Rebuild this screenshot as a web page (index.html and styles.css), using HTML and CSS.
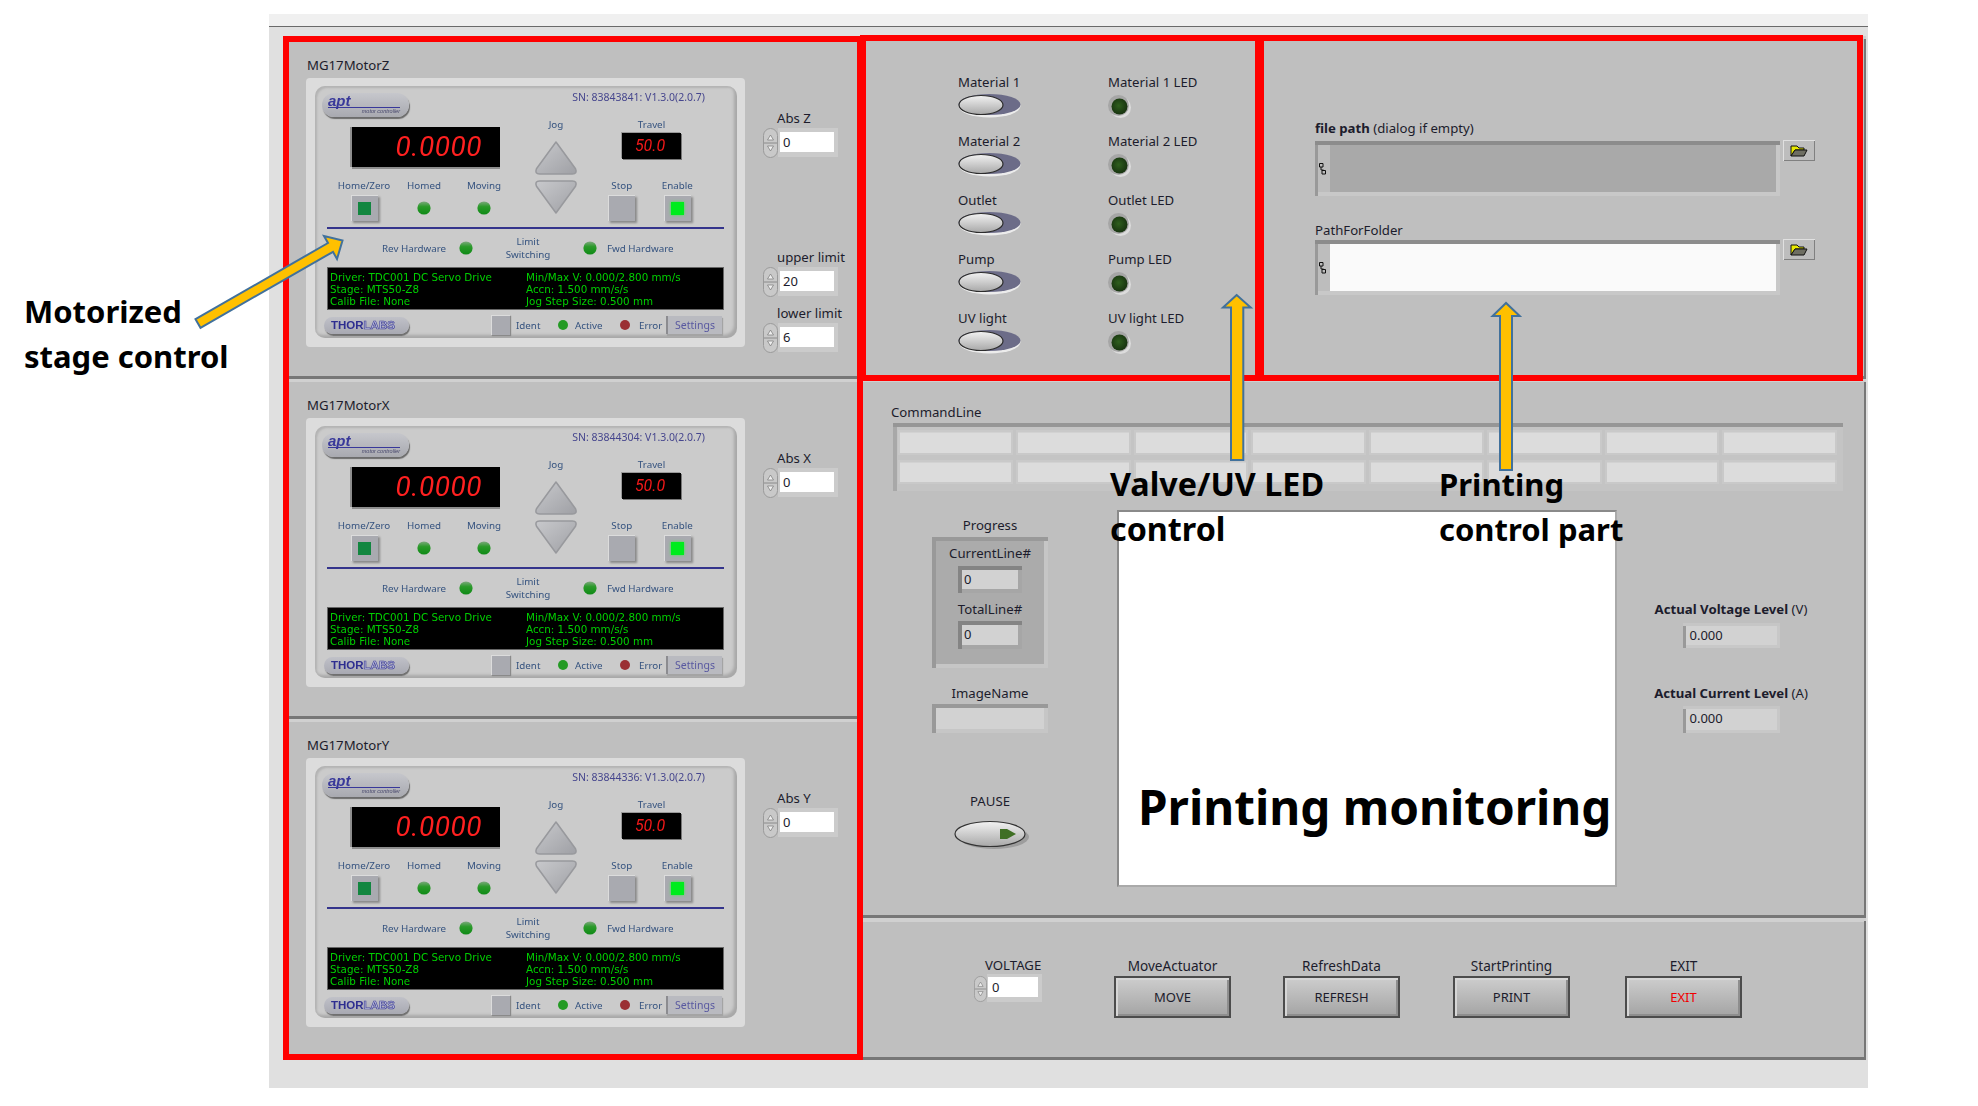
FILE: index.html
```html
<!DOCTYPE html>
<html lang="en">
<head>
<meta charset="utf-8">
<title>Printer control panel</title>
<link rel="stylesheet" href="styles.css">
</head>
<body>
<svg class="defs" width="0" height="0" aria-hidden="true">
  <defs>
    <linearGradient id="knob" x1="0" y1="0" x2="0" y2="1"><stop offset="0" stop-color="#f2f2f2"/><stop offset="1" stop-color="#a8a8a8"/></linearGradient>
    <radialGradient id="dark" cx=".45" cy=".45" r=".6"><stop offset="0" stop-color="#2f5f1e"/><stop offset="1" stop-color="#16300f"/></radialGradient>
    <linearGradient id="lit" x1="0" y1="0" x2="0" y2="1"><stop offset="0" stop-color="#7fa87f"/><stop offset=".4" stop-color="#2a9a2a"/><stop offset="1" stop-color="#0f8a16"/></linearGradient>
    <linearGradient id="tri" x1="0" y1="0" x2="1" y2="1"><stop offset="0" stop-color="#c8c9cc"/><stop offset="1" stop-color="#9fa0a5"/></linearGradient>
    <symbol id="toggle" viewBox="0 0 63 25">
      <ellipse cx="31.5" cy="13" rx="31" ry="11.5" fill="#ececec"/>
      <ellipse cx="31.5" cy="11.5" rx="31" ry="10.5" fill="#6c6c88"/>
      <ellipse cx="23" cy="12" rx="22" ry="9.5" fill="url(#knob)" stroke="#2c2c2c" stroke-width="1.2"/>
    </symbol>
    <symbol id="ledoff" viewBox="0 0 23 23">
      <circle cx="12.5" cy="12.5" r="10.5" fill="#dcdcdc"/>
      <circle cx="10.5" cy="10.5" r="10.5" fill="#a6a6a6"/>
      <circle cx="11.5" cy="11.5" r="8" fill="url(#dark)"/>
    </symbol>
    <symbol id="ledon" viewBox="0 0 14 14"><circle cx="7" cy="7" r="6.6" fill="url(#lit)"/></symbol>
    <symbol id="folder" viewBox="0 0 18 12">
      <path d="M1 1h6l2 2h5v2H5L1 11z" fill="#e8e800" stroke="#111" stroke-width="1"/>
      <path d="M1 11 5 5h12l-3 6z" fill="#6e6e62" stroke="#111" stroke-width="1"/>
    </symbol>
    <symbol id="pathglyph" viewBox="0 0 7 12">
      <path d="M.5.5h3.5v3.5H.5zM3 7.5h3.500v3.500H3zM2 4v3h2.500" fill="none" stroke="#111" stroke-width="1"/>
    </symbol>
    <symbol id="spin" viewBox="0 0 15 30">
      <rect x=".5" y=".5" width="14" height="29" rx="7" fill="#c9c9c9" stroke="#9a9a9a"/>
      <path d="M1 15h13" stroke="#8a8a8a"/>
      <path d="M7.500 7 4.500 12h6z" fill="#efefef" stroke="#777" stroke-width=".7"/>
      <path d="M7.500 23 4.500 18h6z" fill="#efefef" stroke="#777" stroke-width=".7"/>
    </symbol>
    <symbol id="jogarrows" viewBox="0 0 42 73">
      <path d="M21 2 40 28q2 5-3 5H5q-5 0-3-5z" fill="url(#tri)" stroke="#98999d" stroke-width="1.500" stroke-linejoin="round"/>
      <path d="M21 71 40 45q2-5-3-5H5q-5 0-3 5z" fill="url(#tri)" stroke="#98999d" stroke-width="1.500" stroke-linejoin="round"/>
    </symbol>
  </defs>
</svg>

<div class="window">
  <div class="titlebar"></div>
  <div class="panes">
    <div class="motors">

      <section class="panel motor">
        <div class="panel-label">MG17MotorZ</div>
        <div class="motor-body">
          <div class="device">
            <div class="device-inner">
              <div class="dev-header">
                <div class="apt-logo"><span class="apt-word">apt</span><span class="apt-sub">motor controller</span></div>
                <div class="sn">SN: 83843841: V1.3.0(2.0.7)</div>
              </div>
              <div class="dev-main">
                <div class="dev-left">
                  <div class="readout"><span class="seg-big">0.0000</span></div>
                  <div class="cells">
                    <div class="cell"><span class="dev-text">Home/Zero</span><span class="sq-btn"><i class="sq-mark"></i></span></div>
                    <div class="cell"><span class="dev-text">Homed</span><svg class="led-on"><use href="#ledon"/></svg></div>
                    <div class="cell"><span class="dev-text">Moving</span><svg class="led-on"><use href="#ledon"/></svg></div>
                  </div>
                </div>
                <div class="dev-jog"><span class="dev-text">Jog</span><svg class="jog"><use href="#jogarrows"/></svg></div>
                <div class="dev-right">
                  <div class="travel"><span class="dev-text">Travel</span><div class="travel-box"><span class="seg-small">50.0</span></div></div>
                  <div class="cells">
                    <div class="cell cell-r"><span class="dev-text">Stop</span><span class="sq-btn"></span></div>
                    <div class="cell cell-r"><span class="dev-text">Enable</span><span class="sq-btn"><i class="sq-lit"></i></span></div>
                  </div>
                </div>
              </div>
              <div class="dev-line"></div>
              <div class="limits">
                <span class="dev-text rev">Rev Hardware</span><svg class="led-on l1"><use href="#ledon"/></svg>
                <span class="dev-text limit">Limit<br>Switching</span><svg class="led-on l2"><use href="#ledon"/></svg>
                <span class="dev-text fwd">Fwd Hardware</span>
              </div>
              <div class="console">
                <div>Driver: TDC001 DC Servo Drive<br>Stage: MTS50-Z8<br>Calib File: None</div>
                <div>Min/Max V: 0.000/2.800 mm/s<br>Accn: 1.500 mm/s/s<br>Jog Step Size: 0.500 mm</div>
              </div>
              <div class="dev-footer">
                <div class="thor"><b>THOR</b><span>LABS</span></div>
                <span class="id-btn"></span><span class="dev-text id-t">Ident</span>
                <i class="dot dot-g"></i><span class="dev-text act-t">Active</span>
                <i class="dot dot-r"></i><span class="dev-text err-t">Error</span>
                <span class="settings">Settings</span>
              </div>
            </div>
          </div>
          <div class="side">
            <div class="num"><div class="num-label">Abs Z</div><div class="num-row"><svg class="spin"><use href="#spin"/></svg><div class="num-field">0</div></div></div>
            <div class="num num-upper"><div class="num-label">upper limit</div><div class="num-row"><svg class="spin"><use href="#spin"/></svg><div class="num-field">20</div></div></div>
            <div class="num num-lower"><div class="num-label">lower limit</div><div class="num-row"><svg class="spin"><use href="#spin"/></svg><div class="num-field">6</div></div></div>
          </div>
        </div>
      </section>

      <section class="panel motor">
        <div class="panel-label">MG17MotorX</div>
        <div class="motor-body">
          <div class="device">
            <div class="device-inner">
              <div class="dev-header">
                <div class="apt-logo"><span class="apt-word">apt</span><span class="apt-sub">motor controller</span></div>
                <div class="sn">SN: 83844304: V1.3.0(2.0.7)</div>
              </div>
              <div class="dev-main">
                <div class="dev-left">
                  <div class="readout"><span class="seg-big">0.0000</span></div>
                  <div class="cells">
                    <div class="cell"><span class="dev-text">Home/Zero</span><span class="sq-btn"><i class="sq-mark"></i></span></div>
                    <div class="cell"><span class="dev-text">Homed</span><svg class="led-on"><use href="#ledon"/></svg></div>
                    <div class="cell"><span class="dev-text">Moving</span><svg class="led-on"><use href="#ledon"/></svg></div>
                  </div>
                </div>
                <div class="dev-jog"><span class="dev-text">Jog</span><svg class="jog"><use href="#jogarrows"/></svg></div>
                <div class="dev-right">
                  <div class="travel"><span class="dev-text">Travel</span><div class="travel-box"><span class="seg-small">50.0</span></div></div>
                  <div class="cells">
                    <div class="cell cell-r"><span class="dev-text">Stop</span><span class="sq-btn"></span></div>
                    <div class="cell cell-r"><span class="dev-text">Enable</span><span class="sq-btn"><i class="sq-lit"></i></span></div>
                  </div>
                </div>
              </div>
              <div class="dev-line"></div>
              <div class="limits">
                <span class="dev-text rev">Rev Hardware</span><svg class="led-on l1"><use href="#ledon"/></svg>
                <span class="dev-text limit">Limit<br>Switching</span><svg class="led-on l2"><use href="#ledon"/></svg>
                <span class="dev-text fwd">Fwd Hardware</span>
              </div>
              <div class="console">
                <div>Driver: TDC001 DC Servo Drive<br>Stage: MTS50-Z8<br>Calib File: None</div>
                <div>Min/Max V: 0.000/2.800 mm/s<br>Accn: 1.500 mm/s/s<br>Jog Step Size: 0.500 mm</div>
              </div>
              <div class="dev-footer">
                <div class="thor"><b>THOR</b><span>LABS</span></div>
                <span class="id-btn"></span><span class="dev-text id-t">Ident</span>
                <i class="dot dot-g"></i><span class="dev-text act-t">Active</span>
                <i class="dot dot-r"></i><span class="dev-text err-t">Error</span>
                <span class="settings">Settings</span>
              </div>
            </div>
          </div>
          <div class="side">
            <div class="num"><div class="num-label">Abs X</div><div class="num-row"><svg class="spin"><use href="#spin"/></svg><div class="num-field">0</div></div></div>
          </div>
        </div>
      </section>

      <section class="panel motor">
        <div class="panel-label">MG17MotorY</div>
        <div class="motor-body">
          <div class="device">
            <div class="device-inner">
              <div class="dev-header">
                <div class="apt-logo"><span class="apt-word">apt</span><span class="apt-sub">motor controller</span></div>
                <div class="sn">SN: 83844336: V1.3.0(2.0.7)</div>
              </div>
              <div class="dev-main">
                <div class="dev-left">
                  <div class="readout"><span class="seg-big">0.0000</span></div>
                  <div class="cells">
                    <div class="cell"><span class="dev-text">Home/Zero</span><span class="sq-btn"><i class="sq-mark"></i></span></div>
                    <div class="cell"><span class="dev-text">Homed</span><svg class="led-on"><use href="#ledon"/></svg></div>
                    <div class="cell"><span class="dev-text">Moving</span><svg class="led-on"><use href="#ledon"/></svg></div>
                  </div>
                </div>
                <div class="dev-jog"><span class="dev-text">Jog</span><svg class="jog"><use href="#jogarrows"/></svg></div>
                <div class="dev-right">
                  <div class="travel"><span class="dev-text">Travel</span><div class="travel-box"><span class="seg-small">50.0</span></div></div>
                  <div class="cells">
                    <div class="cell cell-r"><span class="dev-text">Stop</span><span class="sq-btn"></span></div>
                    <div class="cell cell-r"><span class="dev-text">Enable</span><span class="sq-btn"><i class="sq-lit"></i></span></div>
                  </div>
                </div>
              </div>
              <div class="dev-line"></div>
              <div class="limits">
                <span class="dev-text rev">Rev Hardware</span><svg class="led-on l1"><use href="#ledon"/></svg>
                <span class="dev-text limit">Limit<br>Switching</span><svg class="led-on l2"><use href="#ledon"/></svg>
                <span class="dev-text fwd">Fwd Hardware</span>
              </div>
              <div class="console">
                <div>Driver: TDC001 DC Servo Drive<br>Stage: MTS50-Z8<br>Calib File: None</div>
                <div>Min/Max V: 0.000/2.800 mm/s<br>Accn: 1.500 mm/s/s<br>Jog Step Size: 0.500 mm</div>
              </div>
              <div class="dev-footer">
                <div class="thor"><b>THOR</b><span>LABS</span></div>
                <span class="id-btn"></span><span class="dev-text id-t">Ident</span>
                <i class="dot dot-g"></i><span class="dev-text act-t">Active</span>
                <i class="dot dot-r"></i><span class="dev-text err-t">Error</span>
                <span class="settings">Settings</span>
              </div>
            </div>
          </div>
          <div class="side">
            <div class="num"><div class="num-label">Abs Y</div><div class="num-row"><svg class="spin"><use href="#spin"/></svg><div class="num-field">0</div></div></div>
          </div>
        </div>
      </section>
    </div>

    <div class="right">
      <div class="right-top">
        <section class="panel valves">
          <div class="valve"><div class="lbl">Material 1</div><svg class="toggle"><use href="#toggle"/></svg></div>
          <div class="valve"><div class="lbl">Material 1 LED</div><svg class="led-off"><use href="#ledoff"/></svg></div>
          <div class="valve"><div class="lbl">Material 2</div><svg class="toggle"><use href="#toggle"/></svg></div>
          <div class="valve"><div class="lbl">Material 2 LED</div><svg class="led-off"><use href="#ledoff"/></svg></div>
          <div class="valve"><div class="lbl">Outlet</div><svg class="toggle"><use href="#toggle"/></svg></div>
          <div class="valve"><div class="lbl">Outlet LED</div><svg class="led-off"><use href="#ledoff"/></svg></div>
          <div class="valve"><div class="lbl">Pump</div><svg class="toggle"><use href="#toggle"/></svg></div>
          <div class="valve"><div class="lbl">Pump LED</div><svg class="led-off"><use href="#ledoff"/></svg></div>
          <div class="valve"><div class="lbl">UV light</div><svg class="toggle"><use href="#toggle"/></svg></div>
          <div class="valve"><div class="lbl">UV light LED</div><svg class="led-off"><use href="#ledoff"/></svg></div>
        </section>
        <section class="panel paths">
          <div class="lbl"><b>file path</b> (dialog if empty)</div>
          <div class="path-row">
            <div class="path-field"><span class="path-gutter"><svg class="path-glyph"><use href="#pathglyph"/></svg></span><span class="path-value path-disabled"></span></div>
            <span class="browse"><svg class="folder"><use href="#folder"/></svg></span>
          </div>
          <div class="lbl path-second">PathForFolder</div>
          <div class="path-row path-row-2">
            <div class="path-field"><span class="path-gutter"><svg class="path-glyph"><use href="#pathglyph"/></svg></span><span class="path-value path-enabled"></span></div>
            <span class="browse"><svg class="folder"><use href="#folder"/></svg></span>
          </div>
        </section>
      </div>

      <section class="panel monitor">
        <div class="lbl">CommandLine</div>
        <div class="cmd-table">
          <span></span><span></span><span></span><span></span><span></span><span></span><span></span><span></span>
          <span></span><span></span><span></span><span></span><span></span><span></span><span></span><span></span>
        </div>
        <div class="monitor-row">
          <div class="mon-left">
            <div class="lbl center">Progress</div>
            <div class="progress">
              <div class="lbl center">CurrentLine#</div>
              <div class="ind">0</div>
              <div class="lbl center total">TotalLine#</div>
              <div class="ind ind-total">0</div>
            </div>
            <div class="lbl center image-lbl">ImageName</div>
            <div class="image-ind"></div>
            <div class="lbl center pause-lbl">PAUSE</div>
            <svg class="pause" viewBox="0 0 76 30" aria-hidden="true">
              <ellipse cx="40" cy="17" rx="35" ry="12" fill="#8f8f8f" opacity=".7"/>
              <ellipse cx="36" cy="14" rx="35" ry="12.500" fill="url(#knob)" stroke="#333" stroke-width="1.200"/>
              <path d="M46 9h7l9 5-9 5h-7z" fill="#3f6f24"/>
            </svg>
          </div>
          <div class="canvas"></div>
          <div class="mon-right">
            <div class="lbl center"><b>Actual Voltage Level</b> (V)</div>
            <div class="ind wide">0.000</div>
            <div class="lbl center current-lbl"><b>Actual Current Level</b> (A)</div>
            <div class="ind wide wide-2">0.000</div>
          </div>
        </div>
      </section>

      <section class="panel actions">
        <div class="voltage">
          <div class="lbl volt-lbl">VOLTAGE</div>
          <div class="num-row volt-row"><svg class="spin spin-v"><use href="#spin"/></svg><div class="num-field volt-field">0</div></div>
        </div>
        <div class="action a1"><div class="lbl center">MoveActuator</div><div class="btn">MOVE</div></div>
        <div class="action a2"><div class="lbl center">RefreshData</div><div class="btn">REFRESH</div></div>
        <div class="action a3"><div class="lbl center">StartPrinting</div><div class="btn">PRINT</div></div>
        <div class="action a4"><div class="lbl center">EXIT</div><div class="btn btn-exit">EXIT</div></div>
      </section>
    </div>
  </div>
</div>

<div class="frame frame-motors"></div>
<div class="frame frame-valves"></div>
<div class="frame frame-paths"></div>

<svg class="arrows" viewBox="0 0 1978 1106" aria-hidden="true">
  <path class="arrow" d="M342.500 240.500 324 236 328 243 195.500 319.200 200.500 327.800 333 251.800 337 259z"/>
  <path class="arrow" d="M1236.700 295 1223 307.500H1231V460H1243.300V307.500H1250.700z"/>
  <path class="arrow" d="M1506 303 1492.600 316H1500V470H1512V316H1519.700z"/>
</svg>

<div class="note note-motor">Motorized<br>stage control</div>
<div class="note note-valve">Valve/UV LED<br>control</div>
<div class="note note-print">Printing<br>control part</div>
<div class="note note-monitor">Printing monitoring</div>
</body>
</html>
```

FILE: styles.css
```css
* { box-sizing: border-box; }
html, body { margin: 0; height: 1106px; overflow: hidden; background: #fff; }
body { padding: 14px 110px 18px 269px; font-family: "Noto Sans", "Liberation Sans", sans-serif; font-size: 13.200px; color: #1c1c2c; position: relative; }
.defs { position: absolute; }
svg { display: block; }

.window { height: 1074px; background: #e0e0e0; display: flex; flex-direction: column; }
.titlebar { height: 13px; flex: none; background: #f0f0f0; border-bottom: 1px solid #6a6a6a; }
.panes { flex: 1; display: grid; grid-template-columns: 577px 1fr; padding: 9px 2px 28px 14px; min-height: 0; }
.panel { background: #bfbfbf; box-shadow: inset 2px 3px 0 #d0d0d0, inset -2px -3px 0 #777; }

/* motor column */
.motors { display: grid; grid-template-rows: 343px 340px 341px; }
.motor { padding: 19px 0 0 24px; }
.motor:first-child { padding-top: 22px; }
.panel-label { height: 14px; line-height: 15px; }
.motor-body { display: flex; margin: 6px 0 0 -1px; }

.device { width: 439px; height: 269px; flex: none; padding: 8px 8px 9px 9px; background: #dcdcdc; border-radius: 4px; filter: blur(.35px); }
.device-inner { height: 252px; padding: 7px 8px 0 7px; background: #cbcbcb; border-radius: 10px; box-shadow: inset 2px 2px 2px #b4b4b4, inset -3px -3px 3px #a8a8a8; }
.dev-text { font-size: 9.800px; line-height: 13px; color: #34527f; display: block; white-space: nowrap; }

.dev-header { height: 24px; display: flex; justify-content: space-between; }
.apt-logo { width: 87px; height: 24px; padding: 0 0 0 6px; border-radius: 12px; background: linear-gradient(#c6c7cc, #a8a9b0); box-shadow: 1px 2px 1px #6c6c6c; color: #38389a; }
.apt-word { display: block; font: italic bold 15px/15px "Liberation Sans", sans-serif; border-bottom: 1px solid #38389a; width: 72px; height: 15px; }
.apt-sub { display: block; font: italic 5.500px/7px "Liberation Sans", sans-serif; text-align: right; width: 72px; color: #44446a; }
.sn { font-size: 10.500px; line-height: 10px; height: 10px; margin: -1px 24px 0 0; color: #46468e; white-space: nowrap; }

.dev-main { display: flex; height: 104px; }
.dev-left { width: 204px; display: flex; flex-direction: column; justify-content: space-between; padding-top: 10px; }
.readout { width: 148px; height: 40px; margin-left: 30px; background: #000; box-shadow: -2px 0 0 #8e8e8e, 0 2px 0 #8e8e8e; display: flex; align-items: center; justify-content: flex-end; padding-right: 18px; }
.seg-big { font: italic 400 28px/1 Roboto, sans-serif; letter-spacing: .5px; color: #ff2020; }
.cells { display: flex; }
.dev-left .cells { padding-left: 12px; }
.cell { width: 60px; display: flex; flex-direction: column; align-items: center; gap: 3px; height: 42px; }
.cell-r { width: 59px; }
.sq-btn { width: 27px; height: 26px; background: #a9aab0; box-shadow: inset 1px 1px 0 #dcdcdc, 2px 2px 2px #8a8a8a; display: flex; align-items: center; justify-content: center; }
.sq-mark { width: 13px; height: 13px; background: #128640; display: block; }
.sq-lit { width: 13px; height: 13px; background: #00ec1e; box-shadow: 0 0 3px #3ef04a; display: block; }
.led-on { width: 14px; height: 14px; margin-top: 6px; }
.dev-jog { width: 60px; display: flex; flex-direction: column; align-items: center; padding-top: 1px; }
.jog { width: 44px; height: 75px; margin-top: 9px; }
.dev-right { width: 119px; padding-left: 8px; display: flex; flex-direction: column; justify-content: space-between; padding-top: 1px; }
.travel { width: 59px; margin-left: 28px; display: flex; flex-direction: column; align-items: center; }
.travel-box { width: 59px; height: 26px; margin-top: 2px; background: #000; box-shadow: -1px -1px 0 #999, 1px 1px 0 #777; display: flex; align-items: center; justify-content: center; padding-right: 3px; }
.seg-small { font: italic 400 16px/1 Roboto, sans-serif; color: #f01818; }

.dev-line { height: 2px; margin: 6px 5px 0 5px; background: #34348c; }
.limits { height: 38px; display: flex; align-items: center; }
.limits .led-on { margin: 0; }
.rev { margin-left: 60px; width: 65px; }
.l1 { margin-left: 12px !important; }
.limit { margin-left: 25px; width: 60px; text-align: center; }
.l2 { margin-left: 25px !important; }
.fwd { margin-left: 10px; }
.console { height: 43px; margin: 0 5px; padding: 4px 0 0 3px; background: #000; box-shadow: inset 0 0 0 1px #666; color: #00d000; display: grid; grid-template-columns: 196px 1fr; font: 10.350px/12px "DejaVu Sans", sans-serif; white-space: nowrap; }
.dev-footer { margin-top: 5px; height: 20px; display: flex; align-items: center; }
.thor { width: 85px; height: 17px; margin-left: 2px; flex: none; border-radius: 9px; background: linear-gradient(#c0c1c8, #a8a9b2); box-shadow: 1px 2px 1px #707070; padding-left: 7px; font: bold 11.500px/16px "Liberation Sans", sans-serif; color: #2e2e90; white-space: nowrap; }
.thor b { font-weight: bold; }
.thor span { color: #c0c2dc; -webkit-text-stroke: .7px #44449a; }
.id-btn { width: 19px; height: 20px; margin-left: 82px; flex: none; background: #a9aab0; box-shadow: inset 1px 1px 0 #dcdcdc, 1px 1px 1px #8a8a8a; }
.id-t { margin-left: 6px; width: 40px; flex: none; }
.dot { display: block; flex: none; width: 10px; height: 10px; border-radius: 50%; }
.dot-g { background: #249a24; margin-left: 2px; }
.act-t { margin-left: 7px; width: 45px; flex: none; }
.dot-r { background: #9a2f34; }
.err-t { margin-left: 9px; width: 27px; flex: none; }
.settings { width: 56px; height: 18px; flex: none; padding-left: 9px; font-size: 10.500px; line-height: 18px; color: #5858a0; background: #b9bac0; box-shadow: inset 2px 0 0 #8c8c90, 1px 2px 1px #a4a4a4; }

.side { width: 76px; margin-left: 18px; padding-top: 33px; flex: none; }
.num-label { margin-left: 14px; height: 14px; line-height: 15px; white-space: nowrap; }
.num-row { display: flex; margin-top: 3px; height: 30px; }
.spin { width: 15px; height: 30px; flex: none; }
.num-field { width: 60px; height: 29px; font-size: 13px; line-height: 20px; background: linear-gradient(#fff, #fff) 2px 4px / 54px 20px no-repeat, #cbcbcb; padding: 4px 0 0 5px; }
.num-upper { margin-top: 92px; }
.num-lower { margin-top: 9px; }

/* top right */
.right { display: grid; grid-template-rows: 343px 539px 142px; }
.right-top { display: grid; grid-template-columns: 400px 1fr; }
.lbl { line-height: 15px; height: 14px; white-space: nowrap; }
.center { text-align: center; }
.valves { padding: 39px 0 0 98px; display: grid; grid-template-columns: 150px 1fr; grid-auto-rows: 43px; row-gap: 16px; box-shadow: inset 2px 3px 0 #d0d0d0, inset -3px -1px 0 #999; }
.toggle { width: 63px; height: 25px; margin-top: 4px; }
.led-off { width: 23px; height: 23px; margin-top: 6px; }
.paths { padding: 85px 0 0 55px; }
.path-row { display: flex; gap: 3px; margin-top: 6px; align-items: flex-start; }
.path-row-2 { margin-top: 3px; }
.path-second { margin-top: 27px; }
.path-field { width: 465px; height: 55px; display: flex; padding: 4px 4px 4px 3px; background: #c8c8c8; box-shadow: inset 0 4px 0 #8c8c8c, inset 3px 0 0 #999; }
.path-gutter { width: 12px; padding-right: 3px; background: #bdbdbd; display: flex; align-items: center; justify-content: center; }
.path-glyph { width: 7px; height: 12px; }
.path-value { flex: 1; }
.path-disabled { background: #a9a9a9; }
.path-enabled { background: #fafafa; }
.browse { width: 32px; height: 21px; margin-top: -1px; background: #bdbdbd; box-shadow: inset 1px 1px 0 #e0e0e0, inset -1px -1px 0 #808080; display: flex; align-items: center; justify-content: center; }
.folder { width: 18px; height: 12px; }

/* monitor */
.monitor { padding: 26px 0 0 31px; }
.cmd-table { width: 950px; height: 68px; margin: 4px 0 0 2px; padding: 9px 8px 9px 7px; display: grid; grid-template-columns: repeat(8, 1fr); gap: 9px 7px; background: #c4c4c4; box-shadow: inset 0 4px 0 #969696, inset 4px 0 0 #a8a8a8; }
.cmd-table span { background: #dcdcdc; box-shadow: 0 0 0 2px #c9c9c9, inset 0 1px 0 #d2d2d2; }
.monitor-row { display: flex; margin: 19px 0 0 41px; align-items: flex-start; }
.mon-left { width: 116px; margin-top: 8px; flex: none; }
.progress { height: 131px; margin-top: 5px; padding: 9px 0 0; background: #ababab; box-shadow: inset 0 4px 0 #999, inset 4px 0 0 #999, inset -4px -4px 0 #c6c6c6; }
.ind { width: 64px; height: 27px; margin: 6px auto 0; padding: 4px 0 0 6px; background: #d2d2d2; font-size: 13px; line-height: 19px; box-shadow: inset 0 4px 0 #848484, inset 4px 0 0 #848484, inset -4px -4px 0 #a6a6a6; }
.total { margin-top: 9px; }
.ind-total { margin-top: 5px; height: 28px; }
.image-lbl { margin-top: 18px; }
.image-ind { height: 29px; margin-top: 4px; background: #d2d2d2; box-shadow: inset 0 4px 0 #999, inset 4px 0 0 #999, inset -4px -4px 0 #c6c6c6; }
.pause-lbl { margin-top: 61px; }
.pause { width: 76px; height: 30px; margin: 12px 0 0 22px; }
.canvas { width: 500px; height: 377px; margin-left: 69px; background: #fff; border: 2px solid #8a8a8a; border-right-color: #aaa; border-bottom-color: #aaa; flex: none; }
.mon-right { width: 162px; margin: 92px 0 0 33px; flex: none; }
.wide { width: 97px; height: 25px; margin-top: 7px; padding: 3px 0 0 7px; background: #d2d2d2; box-shadow: inset 0 3px 0 #c6c6c6, inset 3px 0 0 #999, inset -3px -3px 0 #c8c8c8; }
.wide-2 { margin-top: 6px; height: 27px; }
.current-lbl { margin-top: 38px; }

/* actions */
.actions { display: flex; padding: 40px 0 0 114px; box-shadow: inset 2px 3px 0 #d0d0d0, inset -2px -3px 0 #777, inset 0 4px 0 #d0d0d0; }
.voltage { width: 68px; flex: none; }
.volt-lbl { padding-left: 11px; }
.volt-row { margin-top: 2px; }
.spin-v { width: 13px; }
.volt-field { width: 55px; height: 28px; background: linear-gradient(#fff, #fff) 1px 3px / 50px 20px no-repeat, #cbcbcb; padding: 3px 0 0 5px; }
.action { width: 117px; flex: none; }
.action .lbl { font-size: 13.600px; }
.a1 { margin-left: 72px; }
.a2 { margin-left: 52px; }
.a3 { margin-left: 53px; }
.a4 { margin-left: 55px; }
.btn { height: 42px; margin-top: 4px; border: 2px solid #4c4c4c; background: linear-gradient(#cdcdcd, #a4a4a4); box-shadow: inset 2px 2px 0 #d6d6d6, inset -2px -2px 0 #8e8e8e; text-align: center; line-height: 38px; font-size: 13px; }
.btn-exit { color: #f00000; }

/* annotations laid over the panel */
.frame { position: absolute; border: 6px solid #ff0000; pointer-events: none; }
.frame-motors { left: 283px; top: 36px; width: 580px; height: 1024px; }
.frame-valves { left: 860px; top: 35px; width: 401px; height: 346px; }
.frame-paths { left: 1258px; top: 35px; width: 605px; height: 346px; }
.arrows { position: absolute; left: 0; top: 0; width: 1978px; height: 1106px; pointer-events: none; }
.arrow { fill: #ffc000; stroke: #41719c; stroke-width: 2; }
.note { position: absolute; font: 700 31px/45px "Noto Sans", sans-serif; color: #000; white-space: nowrap; }
.note-motor { left: 24px; top: 289px; }
.note-valve { left: 1110px; top: 461px; font-size: 32.300px; }
.note-print { left: 1439px; top: 462px; }
.note-monitor { left: 1138px; top: 776px; font-size: 47.700px; line-height: 62px; }
```
